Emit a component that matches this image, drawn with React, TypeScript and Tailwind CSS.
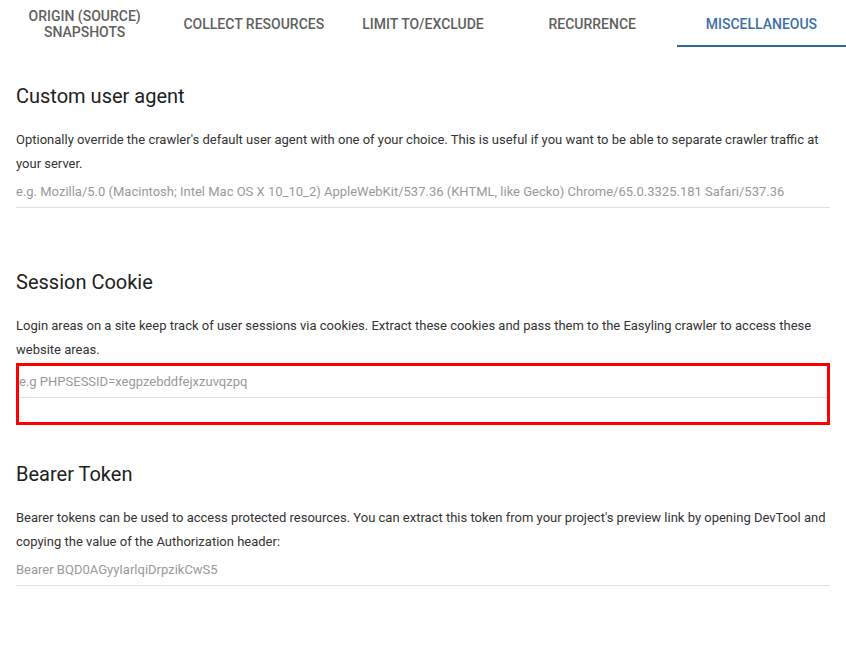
import React from "react";

const tabs = [
  { label: "ORIGIN (SOURCE) SNAPSHOTS", twoLine: true },
  { label: "COLLECT RESOURCES" },
  { label: "LIMIT TO/EXCLUDE" },
  { label: "RECURRENCE" },
  { label: "MISCELLANEOUS", active: true },
];

function Field({ placeholder, inset }: { placeholder: string; inset?: boolean }) {
  return (
    <div>
      <div className="h-[32px] pt-[3.5px] border-b border-[#e0e0e0]">
        <div className="text-[13px] leading-[24px] text-[#999999] whitespace-nowrap overflow-hidden">
          {placeholder}
        </div>
      </div>
      <div className={inset ? "h-[24px]" : "h-[25px]"} />
    </div>
  );
}

function Section({
  title,
  text,
  children,
  mt,
}: {
  title: string;
  text: string;
  children: React.ReactNode;
  mt: string;
}) {
  return (
    <section className={mt}>
      <h2 className="text-[20px] leading-[28px] text-[#212121] font-normal">{title}</h2>
      <p className="mt-[18px] text-[13px] leading-[24px] text-[#333333]">{text}</p>
      {children}
    </section>
  );
}

export default function App() {
  return (
    <div
      className="w-[846px] h-[656px] bg-white overflow-hidden"
      style={{ fontFamily: "Roboto, 'Liberation Sans', sans-serif" }}
    >
      <div className="flex h-[48px]">
        {tabs.map((t) => (
          <div
            key={t.label}
            className={`relative flex-1 flex items-center justify-center text-center text-[14px] leading-[16px] font-medium ${
              t.active ? "text-[#3c6fa8]" : "text-[#5f5f5f]"
            }`}
          >
            {t.twoLine ? (
              <span>
                ORIGIN (SOURCE)
                <br />
                SNAPSHOTS
              </span>
            ) : (
              <span>{t.label}</span>
            )}
            {t.active && (
              <div className="absolute left-0 right-0 bottom-[1px] h-[2px] bg-[#336699]" />
            )}
          </div>
        ))}
      </div>

      <div className="px-4">
        <Section
          mt="mt-[34px]"
          title="Custom user agent"
          text="Optionally override the crawler's default user agent with one of your choice. This is useful if you want to be able to separate crawler traffic at your server."
        >
          <Field placeholder="e.g. Mozilla/5.0 (Macintosh; Intel Mac OS X 10_10_2) AppleWebKit/537.36 (KHTML, like Gecko) Chrome/65.0.3325.181 Safari/537.36" />
        </Section>

        <Section
          mt="mt-[34.5px]"
          title="Session Cookie"
          text="Login areas on a site keep track of user sessions via cookies. Extract these cookies and pass them to the Easyling crawler to access these website areas."
        >
          <div className="mt-[1.5px] border-[3px] border-[#ff0000]">
            <Field inset placeholder="e.g PHPSESSID=xegpzebddfejxzuvqzpq" />
          </div>
        </Section>

        <Section
          mt="mt-[35px]"
          title="Bearer Token"
          text="Bearer tokens can be used to access protected resources. You can extract this token from your project's preview link by opening DevTool and copying the value of the Authorization header:"
        >
          <Field placeholder="Bearer BQD0AGyyIarlqiDrpzikCwS5" />
        </Section>
      </div>
    </div>
  );
}
